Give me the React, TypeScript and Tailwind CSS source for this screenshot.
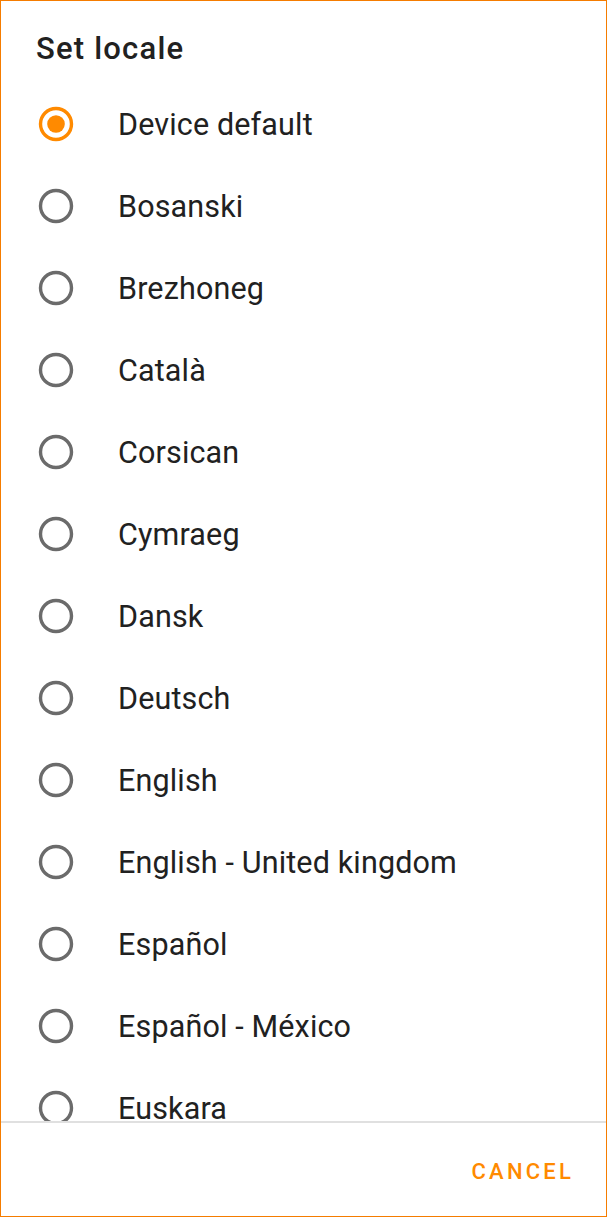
import React from "react";

const items = [
  "Device default",
  "Bosanski",
  "Brezhoneg",
  "Català",
  "Corsican",
  "Cymraeg",
  "Dansk",
  "Deutsch",
  "English",
  "English - United kingdom",
  "Español",
  "Español - México",
  "Euskara",
];

function Radio({ checked }: { checked: boolean }) {
  return (
    <svg width="40" height="40" viewBox="0 0 40 40" className="shrink-0">
      <circle
        cx="20"
        cy="20"
        r="15.5"
        fill="none"
        stroke={checked ? "#ff8a00" : "#6b6b6b"}
        strokeWidth="3.4"
      />
      {checked && <circle cx="20" cy="20" r="8.8" fill="#ff8a00" />}
    </svg>
  );
}

export default function App() {
  return (
    <div
      className="w-[607px] h-[1217px] border border-[#f57c00] bg-white flex flex-col overflow-hidden"
      style={{ fontFamily: "Roboto, 'Noto Sans', sans-serif" }}
    >
      <div className="h-[82px] shrink-0 flex items-center pl-[35px] pt-[12px]">
        <span className="text-[31px] font-medium tracking-[1.2px] text-[#212121] leading-none">Set locale</span>
      </div>
      <div className="flex-1 overflow-hidden">
        {items.map((it, i) => (
          <div key={it} className="h-[82px] flex items-center pl-[35px]">
            <Radio checked={i === 0} />
            <span className="ml-[42px] text-[30.5px] tracking-[0.15px] text-[#212121] leading-none pt-[2px]">{it}</span>
          </div>
        ))}
      </div>
      <div className="h-[2px] bg-[#e0e0e0] shrink-0" />
      <div className="h-[93px] shrink-0 flex items-center justify-end pr-[32px] pt-[4px]">
        <span className="text-[22px] font-medium tracking-[3.2px] text-[#ff8a00] leading-none">CANCEL</span>
      </div>
    </div>
  );
}
